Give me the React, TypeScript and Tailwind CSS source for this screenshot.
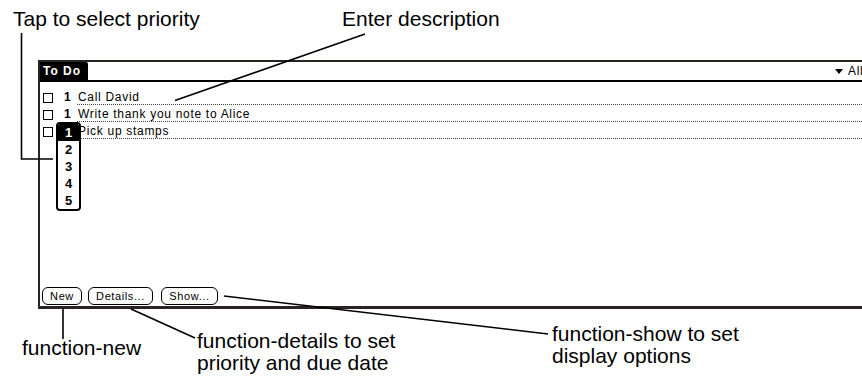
import React from "react";

const rows = [
  { p: "1", text: "Call David" },
  { p: "1", text: "Write thank you note to Alice" },
  { p: "", text: "Pick up stamps" },
];

export default function App() {
  return (
    <div className="relative w-[862px] h-[377px] overflow-hidden bg-white text-black font-['Liberation_Sans',Arial,sans-serif]">
      {/* top callout labels */}
      <div className="flex h-[60px] pt-[8px] text-[21px] leading-[22px]">
        <div className="ml-[13px] w-[329px]">Tap to select priority</div>
        <div>Enter description</div>
      </div>

      {/* device screen */}
      <div className="ml-[38px] w-[850px] h-[249px] border-l-2 border-t-2 border-b-[3px] border-[#2a2321] flex flex-col">
        {/* title bar */}
        <div className="flex h-[20px] border-b-2 border-black items-stretch">
          <div className="w-[48px] bg-black text-white font-bold text-[12px] tracking-[1px] flex items-center pl-[3px] rounded-tr-[2px]">
            To Do
          </div>
          <div className="ml-[747px] flex items-center gap-[5px]">
            <svg width="8" height="5" viewBox="0 0 8 5">
              <polygon points="0,0 8,0 4,5" fill="black" />
            </svg>
            <span className="text-[12px] tracking-[0.7px]">All</span>
          </div>
        </div>

        {/* list */}
        <div className="relative mt-[6px] flex flex-col">
          {rows.map((r, i) => (
            <div key={i} className="flex items-end h-[17px]">
              <div className="ml-[3px] mb-[2px] w-[10px] h-[10px] border border-black shrink-0" />
              <div className="ml-[11px] w-[13px] text-[12px] leading-[14px] font-bold pb-[1px]">{r.p}</div>
              <div className="flex-1 h-full flex items-end border-b border-dotted border-[#444] pl-[1px]">
                <span className="text-[12px] leading-[14px] tracking-[0.7px]">{r.text}</span>
              </div>
            </div>
          ))}

          {/* priority popup */}
          <div className="absolute left-[16px] top-[34px] w-[25px] bg-white border-2 border-black rounded-[4px] flex flex-col overflow-hidden">
            {["1", "2", "3", "4", "5"].map((n, i) => (
              <div
                key={n}
                className={
                  i === 0
                    ? "h-[17px] bg-black text-white font-bold text-[13px] flex items-center justify-center"
                    : "h-[17px] font-bold text-[13px] flex items-center justify-center"
                }
              >
                {n}
              </div>
            ))}
          </div>
        </div>

        <div className="flex-1" />

        {/* buttons */}
        <div className="flex items-center mb-[1px] text-[11px] tracking-[0.6px]">
          <div className="ml-[2px] w-[40px] h-[18px] border border-black rounded-[6px] flex items-center justify-center">New</div>
          <div className="ml-[6px] w-[65px] h-[18px] border border-black rounded-[6px] flex items-center justify-center">Details...</div>
          <div className="ml-[8px] w-[57px] h-[18px] border border-black rounded-[6px] flex items-center justify-center">Show...</div>
        </div>
      </div>

      {/* bottom callout labels */}
      <div className="flex items-start text-[21px] leading-[22px]">
        <div className="w-[197px] pl-[22px] mt-[28px]">function-new</div>
        <div className="w-[355px] mt-[21px]">
          <div>function-details to set</div>
          <div>priority and due date</div>
        </div>
        <div className="mt-[14px]">
          <div>function-show to set</div>
          <div>display options</div>
        </div>
      </div>

      {/* callout lines */}
      <svg className="absolute inset-0 pointer-events-none" width="862" height="377" viewBox="0 0 862 377">
        <g stroke="black" strokeWidth="1.6" fill="none">
          <polyline points="21.5,33 21.5,159 53,159" />
          <line x1="365" y1="34" x2="175" y2="100.5" />
          <line x1="63" y1="309" x2="63" y2="339" />
          <line x1="131" y1="309" x2="195" y2="338" />
          <line x1="224" y1="296" x2="548" y2="334" />
        </g>
      </svg>
    </div>
  );
}
